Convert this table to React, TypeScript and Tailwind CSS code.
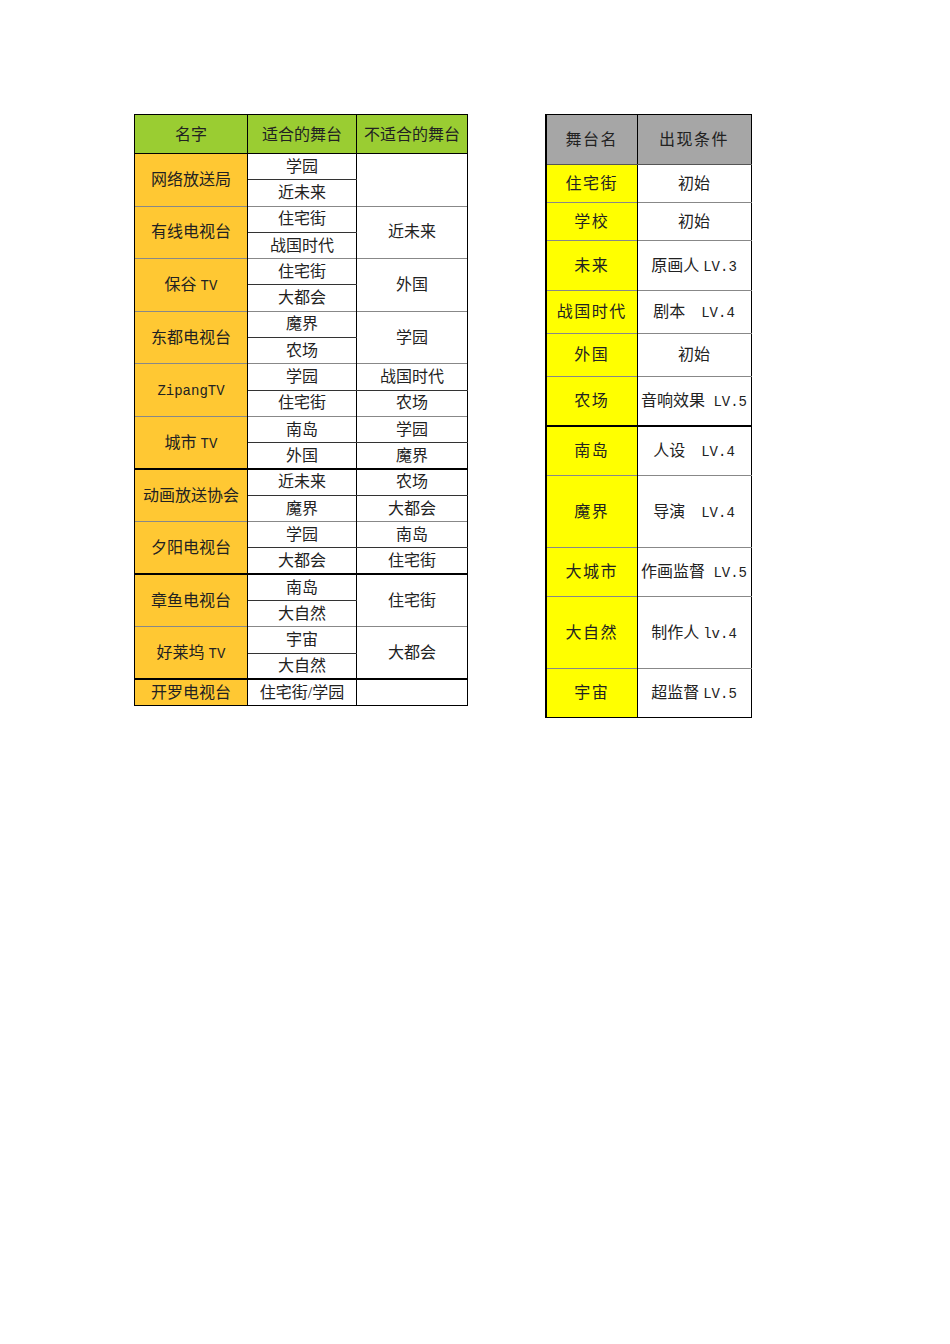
const font = '"Liberation Serif", "Noto Sans CJK SC", serif';

// latin bits are narrower in the original sheet
function L({ children }: { children: string }) {
  return <span className="font-['Liberation_Mono',monospace] text-[14px]">{children}</span>;
}

type Group = {
  name: React.ReactNode;
  good: string[];
  bad: string[] | string | null;
  thick?: boolean;
};

const groups: Group[] = [
  { name: '网络放送局', good: ['学园', '近未来'], bad: null },
  { name: '有线电视台', good: ['住宅街', '战国时代'], bad: '近未来' },
  { name: <>保谷 <L>TV</L></>, good: ['住宅街', '大都会'], bad: '外国' },
  { name: '东都电视台', good: ['魔界', '农场'], bad: '学园' },
  { name: <L>ZipangTV</L>, good: ['学园', '住宅街'], bad: ['战国时代', '农场'] },
  { name: <>城市 <L>TV</L></>, good: ['南岛', '外国'], bad: ['学园', '魔界'] },
  { name: '动画放送协会', good: ['近未来', '魔界'], bad: ['农场', '大都会'], thick: true },
  { name: '夕阳电视台', good: ['学园', '大都会'], bad: ['南岛', '住宅街'] },
  { name: '章鱼电视台', good: ['南岛', '大自然'], bad: '住宅街', thick: true },
  { name: <>好莱坞 <L>TV</L></>, good: ['宇宙', '大自然'], bad: '大都会' },
];

const stages: { name: string; cond: React.ReactNode; h: string; thick?: boolean }[] = [
  { name: '住宅街', cond: '初始', h: 'h-[38px]' },
  { name: '学校', cond: '初始', h: 'h-[38px]' },
  { name: '未来', cond: <>原画人 <L>LV.3</L></>, h: 'h-[50px]' },
  { name: '战国时代', cond: <>剧本　<L>LV.4</L></>, h: 'h-[43px]' },
  { name: '外国', cond: '初始', h: 'h-[43px]' },
  { name: '农场', cond: <>音响效果<L> LV.5</L></>, h: 'h-[49px]' },
  { name: '南岛', cond: <>人设　<L>LV.4</L></>, h: 'h-[50px]', thick: true },
  { name: '魔界', cond: <>导演　<L>LV.4</L></>, h: 'h-[72px]' },
  { name: '大城市', cond: <>作画监督<L> LV.5</L></>, h: 'h-[49px]' },
  { name: '大自然', cond: <>制作人 <L>lv.4</L></>, h: 'h-[72px]' },
  { name: '宇宙', cond: <>超监督 <L>LV.5</L></>, h: 'h-[49px]' },
];

function StationTable() {
  const td = 'h-[26.3px] p-0 text-center align-middle border-x border-x-black';
  return (
    <table className="table-fixed border-collapse border border-black text-[16px] leading-none text-[#222]">
      <colgroup>
        <col className="w-[113px]" />
        <col className="w-[109px]" />
        <col className="w-[111px]" />
      </colgroup>
      <thead>
        <tr className="h-[39px] bg-[#9acd32]">
          <th className="border border-black pt-[2px] font-normal">名字</th>
          <th className="border border-black pt-[2px] font-normal">适合的舞台</th>
          <th className="border border-black pt-[2px] font-normal">不适合的舞台</th>
        </tr>
      </thead>
      <tbody>
        {groups.map((g, i) => {
          const top = g.thick ? 'border-t-2 border-t-black' : 'border-t border-t-[#888]';
          const bad = g.bad;
          return [
            <tr key={i + 'a'} className={top}>
              <td rowSpan={2} className={`${td} bg-[#ffc833]`}>{g.name}</td>
              <td className={`${td} border-b border-b-[#333]`}>{g.good[0]}</td>
              {Array.isArray(bad) ? (
                <td className={`${td} border-b border-b-[#333]`}>{bad[0]}</td>
              ) : (
                <td rowSpan={2} className={td}>{bad}</td>
              )}
            </tr>,
            <tr key={i + 'b'}>
              <td className={td}>{g.good[1]}</td>
              {Array.isArray(bad) && <td className={td}>{bad[1]}</td>}
            </tr>,
          ];
        })}
        <tr className="border-t-2 border-t-black">
          <td className={`${td} bg-[#ffc833]`}>开罗电视台</td>
          <td className={td}>住宅街/学园</td>
          <td className={td}></td>
        </tr>
      </tbody>
    </table>
  );
}

function StageTable() {
  return (
    <table className="table-fixed border-collapse border border-black border-l-2 text-[16px] leading-none text-[#222]">
      <colgroup>
        <col className="w-[91px]" />
        <col className="w-[114px]" />
      </colgroup>
      <thead>
        <tr className="h-[50px] bg-[#a6a6a6]">
          <th className="border border-black border-b-[#555] font-normal tracking-[1.5px]">舞台名</th>
          <th className="border border-black border-b-[#555] font-normal tracking-[1.5px]">出现条件</th>
        </tr>
      </thead>
      <tbody>
        {stages.map((s) => (
          <tr
            key={s.name}
            className={`${s.h} ${s.thick ? 'border-t-2 border-t-black' : 'border-t border-t-[#888]'}`}
          >
            <td className="border-r border-r-black bg-[#ffff00] p-0 text-center tracking-[1.5px]">{s.name}</td>
            <td className="p-0 text-center whitespace-nowrap">{s.cond}</td>
          </tr>
        ))}
      </tbody>
    </table>
  );
}

export default function App() {
  return (
    <div className="min-h-[1344px] w-[950px] bg-white" style={{ fontFamily: font }}>
      <div className="flex items-start gap-[77px] pl-[134px] pt-[114px]">
        <StationTable />
        <StageTable />
      </div>
    </div>
  );
}
